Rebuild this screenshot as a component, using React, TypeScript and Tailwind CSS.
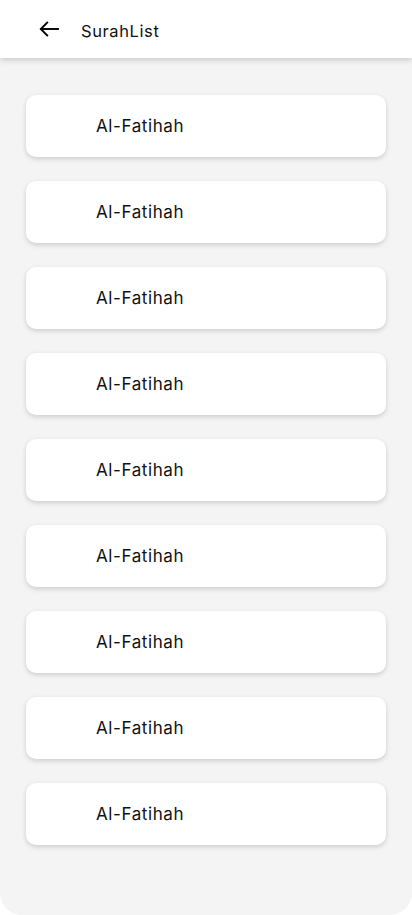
const surahs = Array.from({ length: 9 }, () => "Al-Fatihah")

export default function App() {
  return (
    <div className="min-h-[915px] bg-white" style={{ fontFamily: "Inter, 'Noto Sans', sans-serif" }}>
      <div className="relative z-10 flex h-[58px] items-center bg-white shadow-[0_2px_6px_rgba(0,0,0,0.18)]">
        <button className="ml-[39px] flex h-[20px] w-[20px] items-center justify-center text-black">
          <svg width="20" height="16" viewBox="0 0 20 16" fill="none" stroke="currentColor" strokeWidth="1.9" strokeLinecap="square">
            <path d="M19 8H2.5" />
            <path d="M8.2 1.6 1.8 8l6.4 6.4" />
          </svg>
        </button>
        <h1 className="ml-[22px] mt-[4px] text-[16.5px] tracking-[0.6px] text-[#111]">SurahList</h1>
      </div>
      <div className="flex min-h-[857px] flex-col gap-6 rounded-b-[22px] bg-[#f4f4f4] px-[26px] pb-[70px] pt-[37px]">
        {surahs.map((name, i) => (
          <div
            key={i}
            className="flex h-[62px] items-center rounded-[10px] bg-white pl-[70px] shadow-[0_2px_5px_rgba(0,0,0,0.16)]"
          >
            <span className="mt-[1px] text-[17px] tracking-[0.6px] text-[#111]">{name}</span>
          </div>
        ))}
      </div>
    </div>
  )
}
